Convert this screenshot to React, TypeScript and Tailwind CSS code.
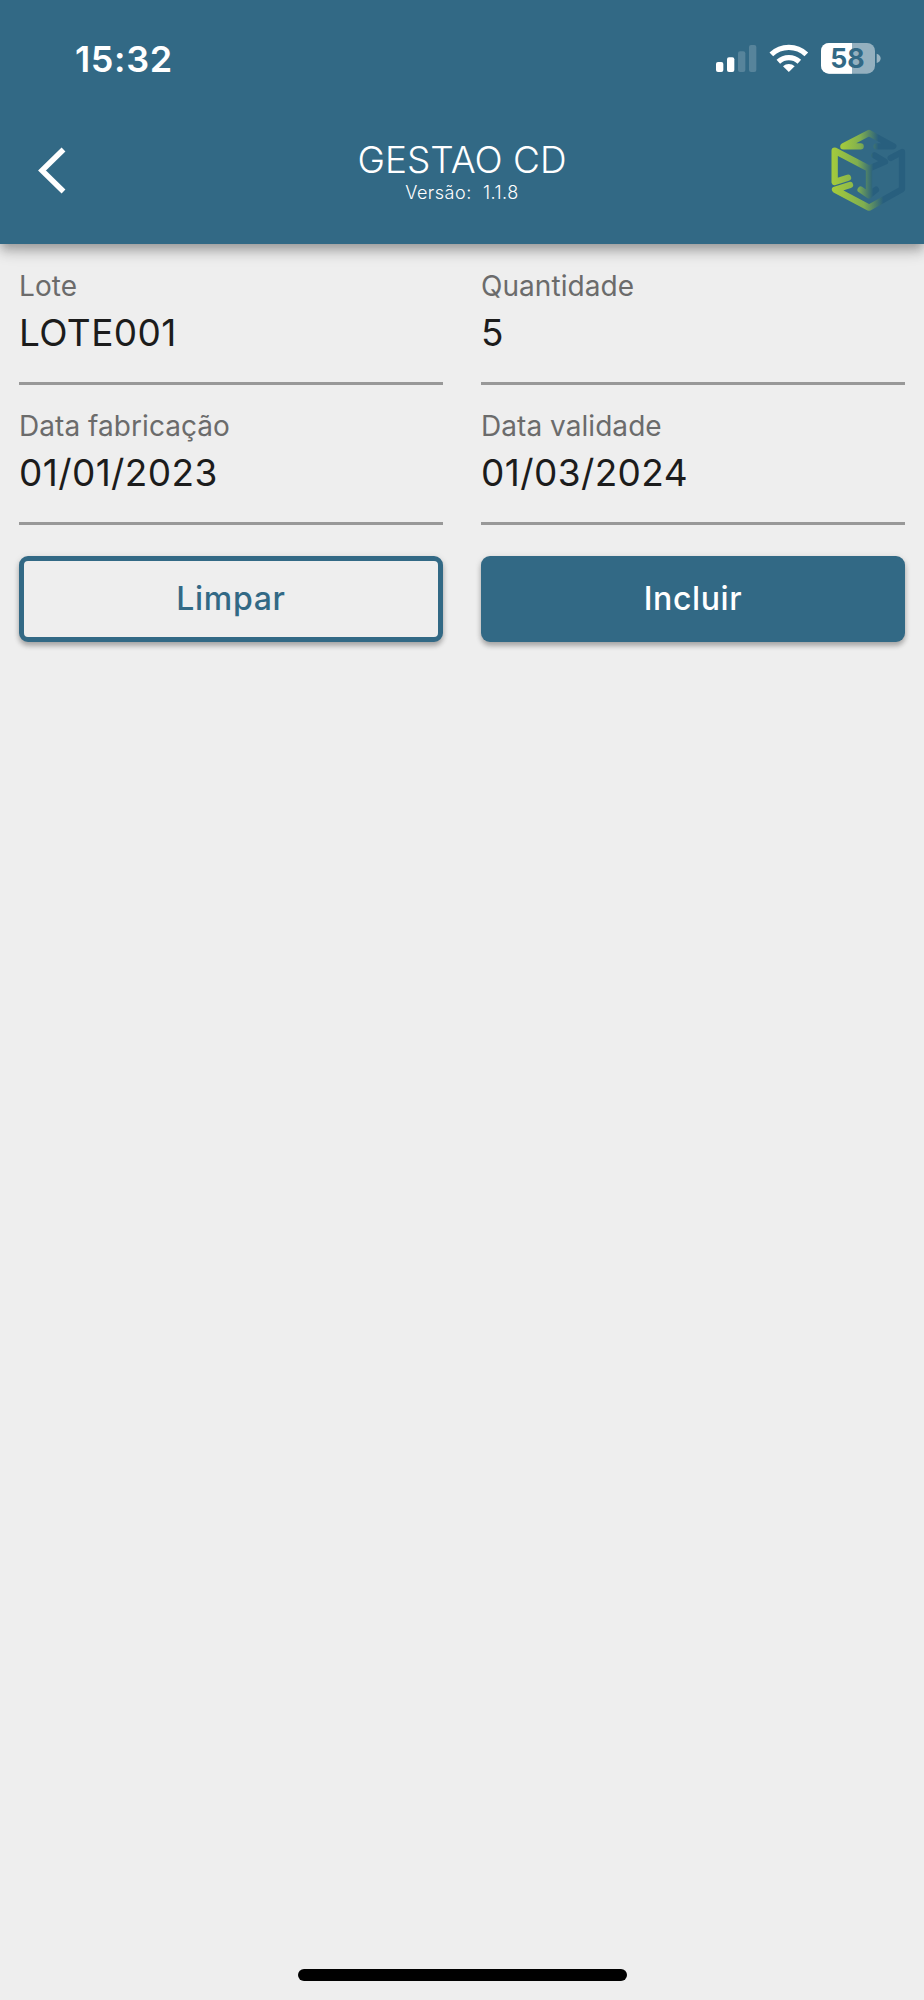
function StatusIcons() {
  return (
    <svg className="h-[60px] w-[200px]" viewBox="0 0 600 180" fill="#fff">
      <rect x="48" y="96" width="22" height="30" rx="6" />
      <rect x="81" y="82" width="22" height="44" rx="6" />
      <rect x="114" y="64" width="22" height="62" rx="6" opacity="0.18" />
      <rect x="147" y="45" width="22" height="81" rx="6" opacity="0.18" />
      <g fill="none" stroke="#fff" strokeWidth="16">
        <path d="M214 73 A76 76 0 0 1 319 73" />
        <path d="M235 95 A47 47 0 0 1 298 95" />
      </g>
      <path d="M266.500 126 L249 109 A25 25 0 0 1 284 109 Z" />
      <rect x="363" y="39" width="162" height="92" rx="24" opacity="0.48" />
      <path d="M456 39 H387 A24 24 0 0 0 363 63 V107 A24 24 0 0 0 387 131 H456 Z" />
      <path d="M530 71 C546 76 546 94 530 99 Z" opacity="0.5" />
      <text x="442" y="114" textAnchor="middle" fontSize="80" fontWeight="700" fill="#326985" fontFamily="Inter, sans-serif">58</text>
    </svg>
  );
}

function Logo() {
  return (
    <svg className="h-[100px] w-[104px]" viewBox="0 0 312 300" fill="none" strokeWidth="19" strokeLinecap="round" strokeLinejoin="round">
      <defs>
        <linearGradient id="top" gradientUnits="userSpaceOnUse" x1="68" y1="0" x2="175" y2="0">
          <stop offset="0" stopColor="#a2c93d" />
          <stop offset="0.5" stopColor="#7fae50" />
          <stop offset="1" stopColor="#285f7e" />
        </linearGradient>
        <linearGradient id="left" gradientUnits="userSpaceOnUse" x1="40" y1="0" x2="160" y2="0">
          <stop offset="0" stopColor="#a2c93d" />
          <stop offset="0.6" stopColor="#7fae50" />
          <stop offset="1" stopColor="#285f7e" />
        </linearGradient>
        <linearGradient id="bottom" gradientUnits="userSpaceOnUse" x1="45" y1="0" x2="190" y2="0">
          <stop offset="0" stopColor="#a2c93d" />
          <stop offset="0.6" stopColor="#7fae50" />
          <stop offset="1" stopColor="#285f7e" />
        </linearGradient>
      </defs>
      <path d="M122 79 H70 L147 39 L220 79 H170" stroke="url(#top)" />
      <path d="M84 173 L44 186 V92 L147 146 L195 125 L163 106 M147 146 V226 L122 209 M147 226 L168 209" stroke="url(#left)" />
      <path d="M90 195 L45 209 L147 263 L246 208 V96 L212 114" stroke="url(#bottom)" />
    </svg>
  );
}

function Field({ label, value }: { label: string; value: string }) {
  return (
    <div className="flex h-[140px] flex-col border-b-[3px] border-[#989898] pt-[21px]">
      <span className="text-[28px] leading-[41px] tracking-[0.05px] text-[#6b6b6b]">{label}</span>
      <span className="mt-[4px] text-[37px] leading-[44px] tracking-[0.4px] text-[#1c1c1c]">{value}</span>
    </div>
  );
}

export default function App() {
  return (
    <div className="flex h-[2000px] w-[924px] flex-col bg-[#eee] font-['Inter',sans-serif]">
      <header className="h-[244px] bg-[#326985] text-white shadow-[0_5px_9px_-2px_rgba(0,0,0,0.2),0_9px_11px_rgba(0,0,0,0.14),0_2px_22px_rgba(0,0,0,0.12)]">
        <div className="flex h-[120px] justify-between pr-[24px] pl-[75px]">
          <span className="pt-[37px] text-[36px] leading-[44px] font-semibold tracking-[0.6px]">15:32</span>
          <div className="pt-[30px]"><StatusIcons /></div>
        </div>
        <div className="grid h-[124px] grid-cols-[104px_1fr_104px]">
          <svg className="h-[100px] w-[104px]" viewBox="0 0 104 100" fill="none" stroke="#fff" strokeWidth="5.500"><path d="M63.500 29.500 L42 50.500 L63.500 71.500" /></svg>
          <div className="flex flex-col items-center pt-[18px]">
            <h1 className="text-[37px] leading-[44px] font-light">GESTAO CD</h1>
            <p className="text-[18px] leading-[22px] font-light tracking-[0.5px] whitespace-pre">{"Versão:  1.1.8"}</p>
          </div>
          <Logo />
        </div>
      </header>
      <main className="grid grid-cols-2 gap-x-[38px] px-[19px] pt-px">
        <Field label="Lote" value="LOTE001" />
        <Field label="Quantidade" value="5" />
        <Field label="Data fabricação" value="01/01/2023" />
        <Field label="Data validade" value="01/03/2024" />
        <button className="mt-[31px] h-[86px] rounded-[9px] border-[5px] border-[#326985] bg-[#eee] text-[32px] font-medium tracking-[0.7px] text-[#326985] shadow-[0_4px_5px_rgba(0,0,0,0.25),0_1px_7px_rgba(0,0,0,0.1)]">Limpar</button>
        <button className="mt-[31px] h-[86px] rounded-[9px] bg-[#326985] text-[32px] font-medium tracking-[0.6px] text-white shadow-[0_4px_5px_rgba(0,0,0,0.25),0_1px_7px_rgba(0,0,0,0.1)]">Incluir</button>
      </main>
      <div className="mt-auto mb-[19px] ml-[298px] h-[12px] w-[329px] rounded-full bg-black" />
    </div>
  );
}
